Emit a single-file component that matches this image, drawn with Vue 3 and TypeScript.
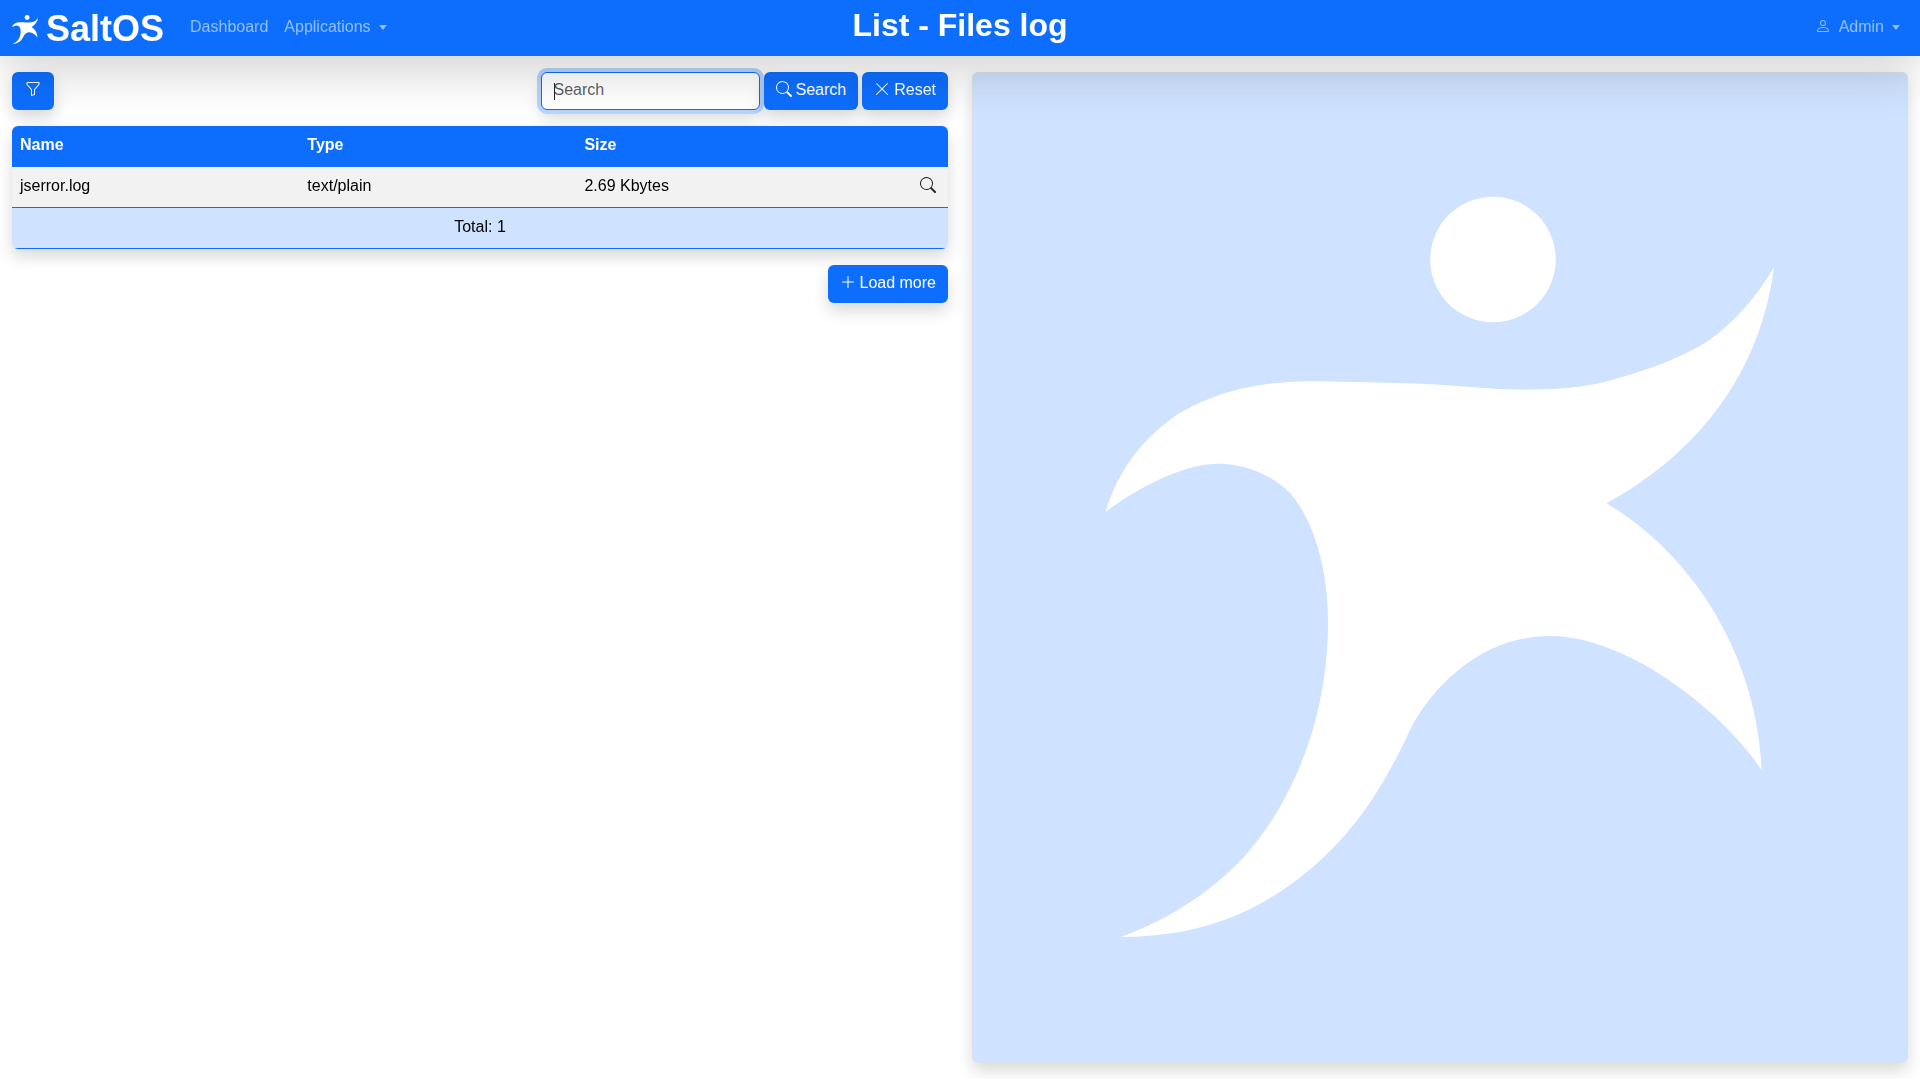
<script setup lang="ts">
import { onMounted, ref } from 'vue'

interface LogFile {
  name: string
  type: string
  size: string
}

const files = ref<LogFile[]>([
  { name: 'jserror.log', type: 'text/plain', size: '2.69 Kbytes' },
])

const query = ref('')
const searchBox = ref<HTMLInputElement | null>(null)

function reset(): void {
  query.value = ''
  searchBox.value?.focus()
}

onMounted(() => searchBox.value?.focus())

// Body of the running figure, shared by the brand mark and the side panel
const figure =
  'M1105.5 512C1117 474 1139 441 1178 414C1216 392 1257 382 1307 381.3' +
  'C1345 382 1400 382 1443 385C1470 387 1498 389.7 1527 389.7' +
  'C1552 389.7 1576 388 1600 383C1640 373 1680 359 1708 341' +
  'C1737 320 1758 295 1774 267C1764 348 1720 441 1606.5 503.3' +
  'C1697 557 1757 660 1761.7 770.3C1722 710 1626 636 1550 636' +
  'C1483 636 1434 684 1410 730C1386 782 1363 817 1333 848' +
  'C1275 907 1208 937 1121 937C1155 924 1200 903 1243 858' +
  'C1297 798 1328 712 1328 623C1328 570 1315 522 1290 493' +
  'C1271 474 1244 463.7 1218 463.7C1184 463.7 1137 488 1105.5 512Z'

const magnifier =
  'M11.742 10.344a6.5 6.5 0 1 0-1.397 1.398h-.001c.03.04.062.078.098.115l3.85 3.85a1 1 0 0 0 1.415-1.414l-3.85-3.85a1.007 1.007 0 0 0-.115-.1zM12 6.5a5.5 5.5 0 1 1-11 0 5.5 5.5 0 0 1 11 0z'
</script>

<template>
  <div class="page">
    <header class="navbar">
      <nav class="nav-left">
        <a class="brand" href="#">
          <svg class="brand-mark" viewBox="1105 197 669 740" aria-hidden="true">
            <circle cx="1493" cy="259.5" r="62.8" />
            <path :d="figure" />
          </svg>
          <span>SaltOS</span>
        </a>
        <a class="nav-link" href="#">Dashboard</a>
        <a class="nav-link" href="#">Applications<i class="caret"></i></a>
      </nav>
      <h1>List - Files log</h1>
      <nav class="nav-right">
        <a class="nav-link" href="#">
          <svg class="icon user" viewBox="0 0 16 16" aria-hidden="true">
            <path d="M8 8a3 3 0 1 0 0-6 3 3 0 0 0 0 6zm2-3a2 2 0 1 1-4 0 2 2 0 0 1 4 0zm4 8c0 1-1 1-1 1H3s-1 0-1-1 1-4 6-4 6 3 6 4zm-1-.004c-.001-.246-.154-.986-.832-1.664C11.516 10.68 10.289 10 8 10c-2.29 0-3.516.68-4.168 1.332-.678.678-.83 1.418-.832 1.664h10z" />
          </svg>
          Admin<i class="caret"></i>
        </a>
      </nav>
    </header>

    <main class="content">
      <section class="list">
        <div class="toolbar">
          <button class="btn" type="button" aria-label="Filter">
            <svg class="icon" viewBox="0 0 16 16" aria-hidden="true">
              <path d="M1.5 1.5A.5.5 0 0 1 2 1h12a.5.5 0 0 1 .5.5v2a.5.5 0 0 1-.128.334L10 8.692V13.500a.5.5 0 0 1-.342.474l-3 1A.5.5 0 0 1 6 14.500V8.692L1.628 3.834A.5.5 0 0 1 1.500 3.500v-2zm1 .5v1.308l4.372 4.858A.5.5 0 0 1 7 8.500v5.306l2-.666V8.500a.5.5 0 0 1 .128-.334L13.500 3.308V2h-11z" />
            </svg>
          </button>
          <form class="search" @submit.prevent>
            <input ref="searchBox" v-model="query" type="text" placeholder="Search" aria-label="Search" />
            <button class="btn" type="submit">
              <svg class="icon" viewBox="0 0 16 16" aria-hidden="true"><path :d="magnifier" /></svg>
              Search
            </button>
            <button class="btn" type="button" @click="reset">
              <svg class="icon" viewBox="0 0 16 16" aria-hidden="true">
                <path d="M2.146 2.146a.5.5 0 0 1 .708 0L8 7.293l5.146-5.147a.5.5 0 0 1 .708.708L8.707 8l5.147 5.146a.5.5 0 0 1-.708.708L8 8.707l-5.146 5.147a.5.5 0 0 1-.708-.708L7.293 8 2.146 2.854a.5.5 0 0 1 0-.708z" />
              </svg>
              Reset
            </button>
          </form>
        </div>

        <table>
          <thead>
            <tr>
              <th class="col-name" scope="col">Name</th>
              <th class="col-type" scope="col">Type</th>
              <th scope="col">Size</th>
              <th class="col-action"></th>
            </tr>
          </thead>
          <tbody>
            <tr v-for="file in files" :key="file.name">
              <td>{{ file.name }}</td>
              <td>{{ file.type }}</td>
              <td>{{ file.size }}</td>
              <td>
                <button class="view" type="button" aria-label="View">
                  <svg class="icon" viewBox="0 0 16 16" aria-hidden="true"><path :d="magnifier" /></svg>
                </button>
              </td>
            </tr>
          </tbody>
          <tfoot>
            <tr>
              <td colspan="4">Total: {{ files.length }}</td>
            </tr>
          </tfoot>
        </table>

        <div class="more">
          <button class="btn" type="button">
            <svg class="icon" viewBox="0 0 16 16" aria-hidden="true">
              <path d="M8 2a.5.5 0 0 1 .5.5v5h5a.5.5 0 0 1 0 1h-5v5a.5.5 0 0 1-1 0v-5h-5a.5.5 0 0 1 0-1h5v-5A.5.5 0 0 1 8 2z" />
            </svg>
            Load more
          </button>
        </div>
      </section>

      <aside class="panel">
        <svg viewBox="973 73 934 989" aria-hidden="true">
          <circle cx="1493" cy="259.5" r="62.8" />
          <path :d="figure" />
        </svg>
      </aside>
    </main>
  </div>
</template>

<style>
body {
  margin: 0;
  background: #fff;
}
</style>

<style scoped>
.page {
  font-family: "Liberation Sans", Arial, sans-serif;
  font-size: 16px;
  line-height: 24px;
  color: #000;
}

.page * {
  box-sizing: border-box;
}

.navbar {
  position: relative;
  z-index: 2;
  display: grid;
  grid-template-columns: 1fr auto 1fr;
  align-items: center;
  height: 56px;
  padding: 0 12px;
  background: #0d6efd;
  box-shadow: 0 16px 48px rgba(0, 0, 0, 0.175);
}

.nav-left,
.nav-right {
  display: flex;
  align-items: center;
}

.nav-right {
  justify-content: flex-end;
}

.brand {
  display: flex;
  align-items: center;
  gap: 8px;
  margin-right: 18px;
  padding-top: 2px;
  color: #fff;
  font-size: 36px;
  font-weight: 700;
  line-height: 40px;
  text-decoration: none;
}

.brand-mark {
  width: 26px;
  height: 29px;
  fill: #fff;
}

.nav-link {
  display: flex;
  align-items: center;
  gap: 8px;
  padding: 0 8px 2px;
  color: rgba(255, 255, 255, 0.55);
  text-decoration: none;
}

.caret {
  border-top: 5px solid;
  border-right: 4px solid transparent;
  border-left: 4px solid transparent;
}

h1 {
  margin: 0;
  padding-bottom: 6px;
  color: #fff;
  font-size: 32px;
  font-weight: 700;
  line-height: 40px;
}

.icon {
  flex: none;
  width: 16px;
  height: 16px;
  margin-bottom: 2px;
  fill: currentColor;
}

.content {
  display: grid;
  grid-template-columns: 1fr 1fr;
  gap: 24px;
  align-items: start;
  padding: 16px 12px;
}

.list {
  display: flex;
  flex-direction: column;
  gap: 16px;
}

.toolbar {
  display: flex;
  justify-content: space-between;
}

.search {
  display: flex;
  gap: 4px;
}

.btn {
  display: flex;
  align-items: center;
  gap: 4px;
  height: 38px;
  padding: 5px 12px 7px;
  border: 0;
  border-radius: 6px;
  background: #0d6efd;
  box-shadow: 0 8px 16px rgba(0, 0, 0, 0.15);
  color: #fff;
  font: inherit;
  cursor: pointer;
}

.btn[aria-label] {
  padding: 5px 13px 7px;
}

input {
  width: 219px;
  height: 38px;
  padding: 5px 12px 7px;
  border: 1px solid #dee2e6;
  border-radius: 6px;
  background: #fff;
  box-shadow: 0 8px 16px rgba(0, 0, 0, 0.15);
  color: #212529;
  font: inherit;
}

input:focus {
  border-color: #0d6efd;
  outline: 0;
  box-shadow: 0 0 0 4px #b6d4fe, 0 8px 16px rgba(0, 0, 0, 0.15);
}

/* Steady text cursor while the focused box is still empty */
input:focus:placeholder-shown {
  background: linear-gradient(#212529, #212529) 12px 10px / 1px 17px no-repeat #fff;
  caret-color: transparent;
}

input::placeholder {
  color: rgba(33, 37, 41, 0.75);
  opacity: 1;
}

table {
  width: 100%;
  border-spacing: 0;
  border-radius: 6px;
  overflow: hidden;
  box-shadow: 0 8px 16px rgba(0, 0, 0, 0.15);
  table-layout: fixed;
}

th,
td {
  height: 41px;
  padding: 7px 8px 9px;
  border-bottom: 1px solid #0d6efd;
  text-align: left;
}

th {
  background: #0d6efd;
  color: #fff;
  font-weight: 700;
}

tbody td {
  background: #f2f2f2;
}

tfoot td {
  background: #cfe2ff;
  text-align: center;
}

.col-name {
  width: 30.7%;
}

.col-type {
  width: 29.6%;
}

.col-action {
  width: 40px;
}

.view {
  display: block;
  margin-left: auto;
  padding: 0 4px;
  border: 0;
  background: none;
  color: #212529;
  cursor: pointer;
}

.view .icon {
  display: block;
}

.more {
  display: flex;
  justify-content: flex-end;
}

.panel {
  border: 1px solid #dee2e6;
  border-radius: 6px;
  background: #cfe2ff;
  box-shadow: 0 8px 16px rgba(0, 0, 0, 0.15);
  overflow: hidden;
}

.panel svg {
  display: block;
  width: 100%;
  fill: #fff;
}
</style>
